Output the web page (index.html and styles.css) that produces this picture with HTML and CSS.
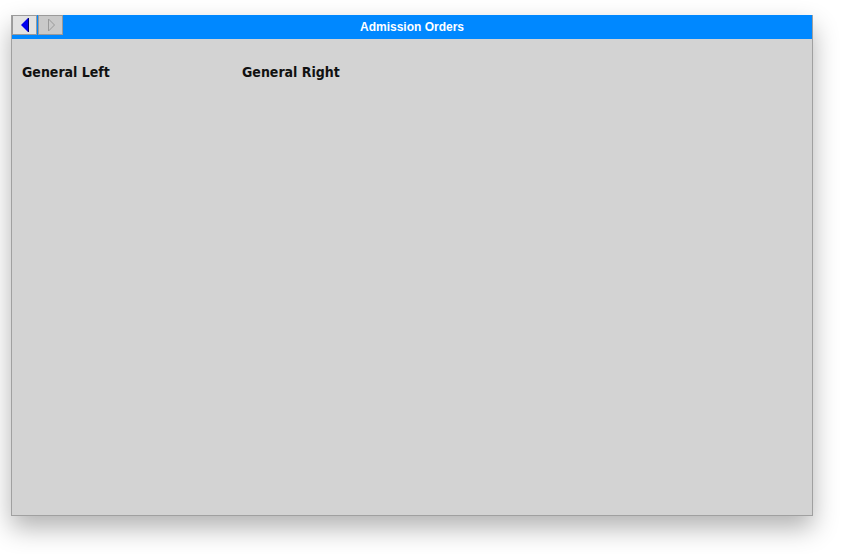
FILE: index.html
```html
<!DOCTYPE html>
<html>
<head>
<meta charset="utf-8">
<link rel="stylesheet" href="styles.css">
</head>
<body>
<div class="window">
  <div class="titlebar">
    <div class="nav">
      <button class="btn back" aria-label="Back">
        <svg width="10" height="14" viewBox="0 0 10 14"><polygon points="8,0 8,14 1,7" fill="#0000ee"/><line x1="8.5" y1="0" x2="8.5" y2="14" stroke="#000066" stroke-width="1"/></svg>
      </button>
      <button class="btn fwd" aria-label="Forward">
        <svg width="10" height="14" viewBox="0 0 10 14"><polygon points="2.5,1 2.5,13 8.5,7" fill="none" stroke="#999" stroke-width="1"/></svg>
      </button>
    </div>
    <div class="title">Admission Orders</div>
  </div>
  <div class="content">
    <div class="col"><h2>General Left</h2></div>
    <div class="col"><h2>General Right</h2></div>
  </div>
</div>
</body>
</html>
```
FILE: styles.css
```css
html, body {
  margin: 0;
  padding: 0;
  background: #ffffff;
}
body {
  box-sizing: border-box;
  min-height: 554px;
  padding: 15px 0 0 11px;
}
.window {
  width: 800px;
  height: 500px;
  border: 1px solid #a0a0a0;
  border-top: none;
  background: #d3d3d3;
  box-shadow: 0 12px 24px rgba(0,0,0,0.3);
  display: flex;
  flex-direction: column;
}
.titlebar {
  height: 24px;
  background: #0088ff;
  position: relative;
  display: flex;
  align-items: flex-start;
}
.nav {
  display: flex;
  gap: 1px;
  position: relative;
  z-index: 1;
}
.btn {
  width: 25px;
  height: 20px;
  margin: 0;
  padding: 0;
  border: 1px solid #9a9a9a;
  display: flex;
  align-items: center;
  justify-content: center;
}
.btn.back { background: #e2e2e2; }
.btn.fwd { background: #c9c9c9; }
.title {
  position: absolute;
  left: 0;
  right: 0;
  top: 0;
  height: 24px;
  line-height: 24px;
  text-align: center;
  color: #ffffff;
  font-family: "Liberation Sans", Arial, sans-serif;
  font-weight: bold;
  font-size: 12px;
}
.content {
  flex: 1;
  display: flex;
  padding: 25px 10px 0 10px;
}
.col {
  width: 220px;
}
.col h2 {
  margin: 0;
  font-family: "DejaVu Sans Condensed", "DejaVu Sans", sans-serif;
  font-stretch: condensed;
  font-weight: bold;
  font-size: 14px;
  color: #111111;
}
```
